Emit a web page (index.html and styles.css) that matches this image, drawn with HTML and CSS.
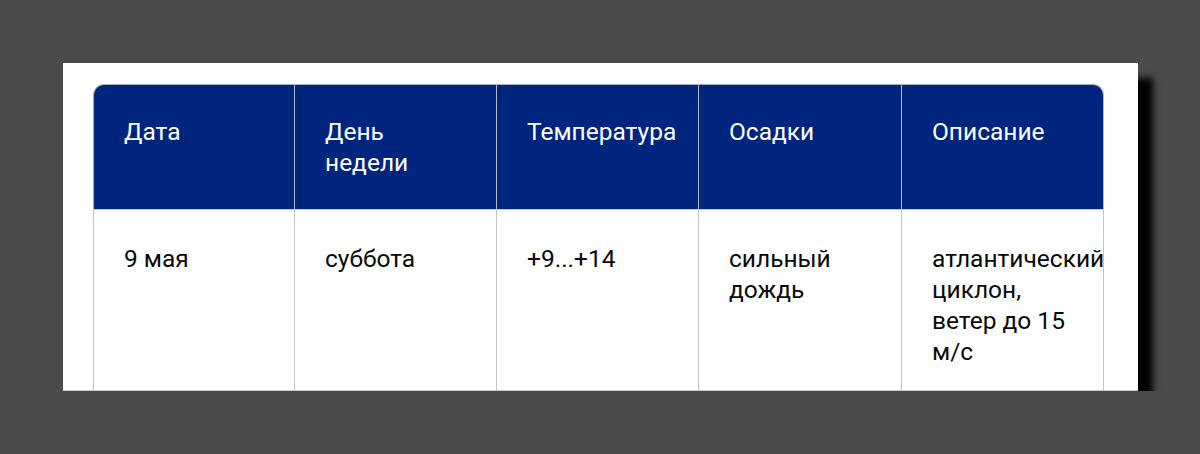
FILE: index.html
```html
<!DOCTYPE html>
<html lang="ru">
<head>
<meta charset="utf-8">
<title>Погода</title>
<link rel="stylesheet" href="styles.css">
</head>
<body>
<div class="card">
  <table class="weather">
    <colgroup>
      <col class="c1"><col class="c2"><col class="c3"><col class="c4"><col class="c5">
    </colgroup>
    <thead>
      <tr>
        <th>Дата</th>
        <th>День недели</th>
        <th>Температура</th>
        <th>Осадки</th>
        <th>Описание</th>
      </tr>
    </thead>
    <tbody>
      <tr>
        <td>9 мая</td>
        <td>суббота</td>
        <td>+9...+14</td>
        <td>сильный дождь</td>
        <td>атлантический циклон, ветер до 15 м/с</td>
      </tr>
    </tbody>
  </table>
</div>
</body>
</html>
```
FILE: styles.css
```css
html, body {
  margin: 0;
  padding: 0;
  background: #4b4b4b;
  font-family: Roboto, "Liberation Sans", sans-serif;
}

.card {
  margin: 63px 0 0 63px;
  width: 1075px;
  height: 328px;
  box-sizing: border-box;
  padding: 21px 0 0 30px;
  background: #fff;
  overflow: hidden;
  border-bottom: 1px solid #c8c8c8;
  box-shadow: 15px 15px 7px #000;
}

.weather {
  border-collapse: separate;
  border-spacing: 0;
  table-layout: fixed;
  width: 1011px;
  font-size: 24.5px;
  line-height: 31px;
}

.c1 { width: 202px; }
.c2 { width: 202px; }
.c3 { width: 202px; }
.c4 { width: 203px; }
.c5 { width: 202px; }

.weather th {
  background: #00257f;
  color: #fff;
  font-weight: 400;
  text-align: left;
  vertical-align: top;
  padding: 31px 30px 31px 30px;
  border-top: 1px solid #a9adbb;
  border-right: 1px solid #b4b8c4;
}

.weather th:first-child {
  border-left: 1px solid #a9adbb;
  border-top-left-radius: 11px;
}

.weather th:last-child {
  border-top-right-radius: 11px;
}

.weather td {
  color: #0a0a0a;
  vertical-align: top;
  padding: 33px 30px 31px 30px;
  border-top: 1px solid #c8c8c8;
  border-right: 1px solid #c4c4c4;
  height: 160px;
}

.weather td:first-child {
  border-left: 1px solid #c4c4c4;
}
```
